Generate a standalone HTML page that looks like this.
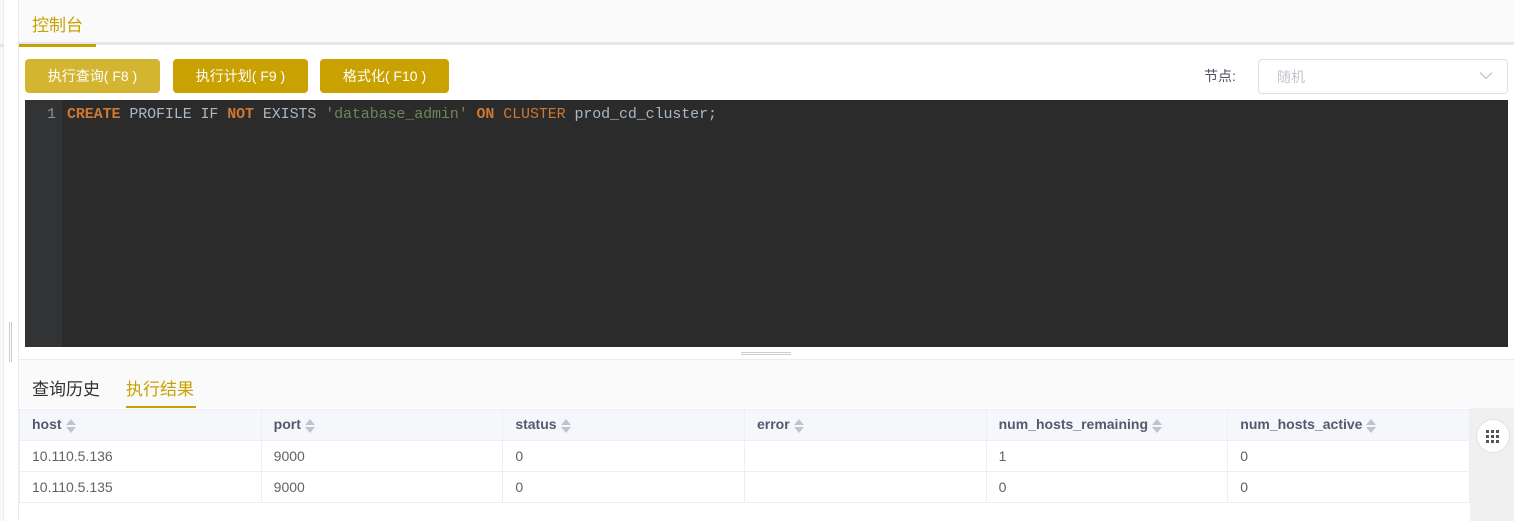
<!DOCTYPE html>
<html><head><meta charset="utf-8"><style>
*{box-sizing:border-box;margin:0;padding:0}
body{width:1514px;height:521px;overflow:hidden;background:#fff;font-family:"Liberation Sans","Noto Sans CJK SC",sans-serif;position:relative}
.abs{position:absolute}
.btn{position:absolute;top:59px;height:34px;border-radius:4px;color:#fff;font-size:14px;line-height:34px;text-align:center}
.code{font-family:"Liberation Mono","DejaVu Sans Mono",monospace;font-size:15px;letter-spacing:-0.1px}
table{border-collapse:collapse;position:absolute;left:19px;top:409px;width:1451px;font-size:14px;color:#606266;table-layout:fixed}
td,th{border:1px solid #ebeef5;height:31px;padding-left:12px;text-align:left}
th{background:#f5f7fa;font-weight:bold;color:#515a6e}
.s{display:inline-block;vertical-align:middle;margin-left:4px;width:11px;height:16px;position:relative}
.s:before,.s:after{content:"";position:absolute;left:0;border-left:5.5px solid transparent;border-right:5.5px solid transparent}
.s:before{top:1px;border-bottom:6px solid #c0c4cc}
.s:after{top:9px;border-top:6px solid #c0c4cc}
</style></head><body>
<div class="abs" style="left:0;top:0;width:4px;height:521px;background:#f7f8fa;border-right:1px solid #eceef2"></div>
<div class="abs" style="left:0;top:44px;width:4px;height:3px;background:#e4e6eb"></div>
<div class="abs" style="left:18px;top:0;width:1px;height:521px;background:#e8eaee"></div>
<div class="abs" style="left:9px;top:322px;width:1px;height:40px;background:#ccc"></div>
<div class="abs" style="left:11px;top:322px;width:1px;height:40px;background:#ccc"></div>
<div class="abs" style="left:19px;top:0;width:1495px;height:45px;background:#fafafb;border-bottom:3px solid #e4e6ee"></div>
<div class="abs" style="left:19px;top:44px;width:77px;height:3px;background:#c9a100"></div>
<div class="abs" style="left:32px;top:11px;font-size:17px;color:#c9a100">控制台</div>
<div class="btn" style="left:25px;width:135px;background:#d4b531">执行查询( F8 )</div>
<div class="btn" style="left:173px;width:135px;background:#c9a100">执行计划( F9 )</div>
<div class="btn" style="left:320px;width:129px;background:#c9a100">格式化( F10 )</div>
<div class="abs" style="left:1204px;top:66px;font-size:14px;color:#4a5060">节点:</div>
<div class="abs" style="left:1258px;top:59px;width:250px;height:35px;border:1px solid #dcdfe6;border-radius:4px;background:#fff"></div>
<div class="abs" style="left:1277px;top:67px;font-size:14px;color:#c0c4cc">随机</div>
<svg class="abs" style="left:1479px;top:71px" width="14" height="9"><path d="M1 1.5L7 7.5L13 1.5" fill="none" stroke="#c0c4cc" stroke-width="1.3"/></svg>
<div class="abs" style="left:25px;top:100px;width:1483px;height:247px;background:#2b2b2b"></div>
<div class="abs" style="left:25px;top:100px;width:37px;height:247px;background:#313335"></div>
<div class="abs code" style="left:47px;top:106px;color:#8a8f94">1</div>
<div class="abs code" style="left:67px;top:106px;color:#a9b7c6;white-space:pre"><b style="color:#cc7832">CREATE</b> PROFILE IF <b style="color:#cc7832">NOT</b> EXISTS <span style="color:#6a8759">'database_admin'</span> <b style="color:#cc7832">ON</b> <span style="color:#cc7832">CLUSTER</span> prod_cd_cluster;</div>
<div class="abs" style="left:741px;top:352px;width:50px;height:1px;background:#ccc"></div>
<div class="abs" style="left:741px;top:354px;width:50px;height:1px;background:#ccc"></div>
<div class="abs" style="left:19px;top:359px;width:1495px;height:162px;background:#fafafa;border-top:1px solid #ebebeb"></div>
<div class="abs" style="left:32px;top:375px;font-size:17px;color:#303133">查询历史</div>
<div class="abs" style="left:126px;top:375px;font-size:17px;color:#c9a100">执行结果</div>
<div class="abs" style="left:126px;top:406px;width:70px;height:2px;background:#c9a100"></div>
<div class="abs" style="left:19px;top:408px;width:1451px;height:113px;background:#fff"></div>
<div class="abs" style="left:1470px;top:408px;width:44px;height:113px;background:#f0f0f0"></div>
<div class="abs" style="left:1476px;top:419px;width:34px;height:34px;border-radius:50%;background:#fff;border:1px solid #e0e0e0"></div>
<svg class="abs" style="left:1486px;top:430px" width="14" height="13" fill="#555"><rect x="0" y="0" width="3" height="3"/><rect x="5" y="0" width="3" height="3"/><rect x="10" y="0" width="3" height="3"/><rect x="0" y="5" width="3" height="3"/><rect x="5" y="5" width="3" height="3"/><rect x="10" y="5" width="3" height="3"/><rect x="0" y="10" width="3" height="3"/><rect x="5" y="10" width="3" height="3"/><rect x="10" y="10" width="3" height="3"/></svg>
<table>
<tr><th>host<span class="s"></span></th><th>port<span class="s"></span></th><th>status<span class="s"></span></th><th>error<span class="s"></span></th><th>num_hosts_remaining<span class="s"></span></th><th>num_hosts_active<span class="s"></span></th></tr>
<tr><td>10.110.5.136</td><td>9000</td><td>0</td><td></td><td>1</td><td>0</td></tr>
<tr><td>10.110.5.135</td><td>9000</td><td>0</td><td></td><td>0</td><td>0</td></tr>
</table>
</body></html>
